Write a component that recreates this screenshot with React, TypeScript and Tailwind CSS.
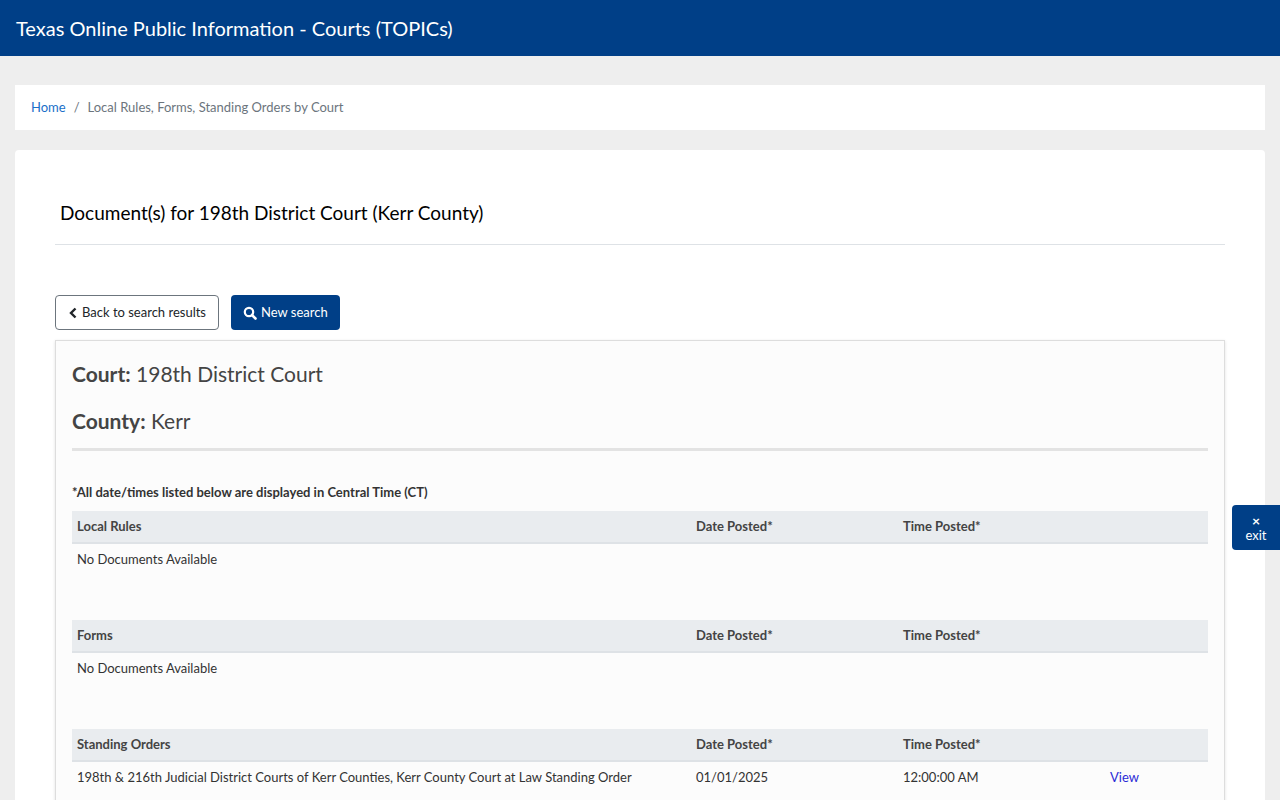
export default function App() {
  const sections = [
    { title: "Local Rules", rows: [] as string[][] },
    { title: "Forms", rows: [] as string[][] },
    {
      title: "Standing Orders",
      rows: [["198th & 216th Judicial District Courts of Kerr Counties, Kerr County Court at Law Standing Order", "01/01/2025", "12:00:00 AM"]],
    },
  ]
  return (
    <div className="min-h-[800px] bg-[#eeeeee] font-[Lato,sans-serif] text-[#212529]">
      <header className="flex h-14 items-center bg-[#003f87] px-4 text-[20px] text-white">
        Texas Online Public Information - Courts (TOPICs)
      </header>
      <div className="px-[15px] pt-[29px]">
        <nav className="flex h-[45px] items-center gap-2 bg-white px-4 text-[13px]">
          <a className="text-[#1a6fc9]">Home</a>
          <span className="text-[#6c757d]">/</span>
          <span className="text-[#6c757d]">Local Rules, Forms, Standing Orders by Court</span>
        </nav>
        <main className="mt-5 rounded bg-white px-10 pb-10 pt-[50px]">
          <h1 className="border-b border-[#dee2e6] px-[5px] pb-[18px] text-[19px] leading-[26px] text-black">
            Document(s) for 198th District Court (Kerr County)
          </h1>
          <div className="mt-[50px] flex gap-3">
            <button className="flex h-[35px] items-center gap-1 rounded border border-[#6c757d] bg-white px-3 text-[13px] text-[#212529]">
              <svg width="10" height="12" viewBox="0 0 10 12"><path d="M7.5 1.5 3 6l4.5 4.5" fill="none" stroke="#212529" strokeWidth="2.4" /></svg>
              Back to search results
            </button>
            <button className="flex h-[35px] items-center gap-1 rounded bg-[#003f87] px-3 text-[13px] text-white">
              <svg width="14" height="14" viewBox="0 0 14 14"><circle cx="6" cy="6" r="4.2" fill="none" stroke="white" strokeWidth="2.2" /><path d="M9 9l3.5 3.5" stroke="white" strokeWidth="2.6" strokeLinecap="round" /></svg>
              New search
            </button>
          </div>
          <section className="mt-[10px] border border-[#dddddd] bg-[#fcfcfc] px-4 pb-6 pt-[18px] shadow-[0_1px_3px_rgba(0,0,0,0.12)]">
            <div className="text-[21px] leading-[30px] text-[#444]"><b className="font-bold">Court:</b> 198th District Court</div>
            <div className="mt-[17px] text-[21px] leading-[30px] text-[#444]"><b className="font-bold">County:</b> Kerr</div>
            <div className="mt-[12px] h-[3px] bg-[#e3e3e3]" />
            <p className="mt-[32px] text-[13px] leading-[18px] font-bold text-[#333]">*All date/times listed below are displayed in Central Time (CT)</p>
            <div className="mt-[10px] flex flex-col gap-[45px]">
              {sections.map((s) => (
                <table key={s.title} className="w-full table-fixed text-left text-[13px] text-[#333]">
                  <thead>
                    <tr className="h-8 border-b-2 border-[#dee2e6] bg-[#e9ecef] font-bold text-[#444]">
                      <th className="w-[618px] px-[5px]">{s.title}</th>
                      <th className="w-[207px] px-[6px]">Date Posted*</th>
                      <th className="w-[207px] px-[6px]">Time Posted*</th>
                      <th />
                    </tr>
                  </thead>
                  <tbody>
                    {s.rows.length === 0 ? (
                      <tr className="h-8"><td className="px-[5px]" colSpan={4}>No Documents Available</td></tr>
                    ) : (
                      s.rows.map((r) => (
                        <tr key={r[0]} className="h-8">
                          <td className="whitespace-nowrap px-[5px]">{r[0]}</td>
                          <td className="px-[6px]">{r[1]}</td>
                          <td className="px-[6px]">{r[2]}</td>
                          <td className="px-[6px]"><a className="text-[#2c2cd6]">View</a></td>
                        </tr>
                      ))
                    )}
                  </tbody>
                </table>
              ))}
            </div>
          </section>
        </main>
      </div>
      <button className="fixed right-0 top-[505px] flex h-[45px] w-12 flex-col items-center justify-center rounded-l bg-[#003f87] text-[13px] leading-[14px] text-white">
        <span className="text-[14px] leading-[14px] font-bold">×</span>
        <span>exit</span>
      </button>
    </div>
  )
}
